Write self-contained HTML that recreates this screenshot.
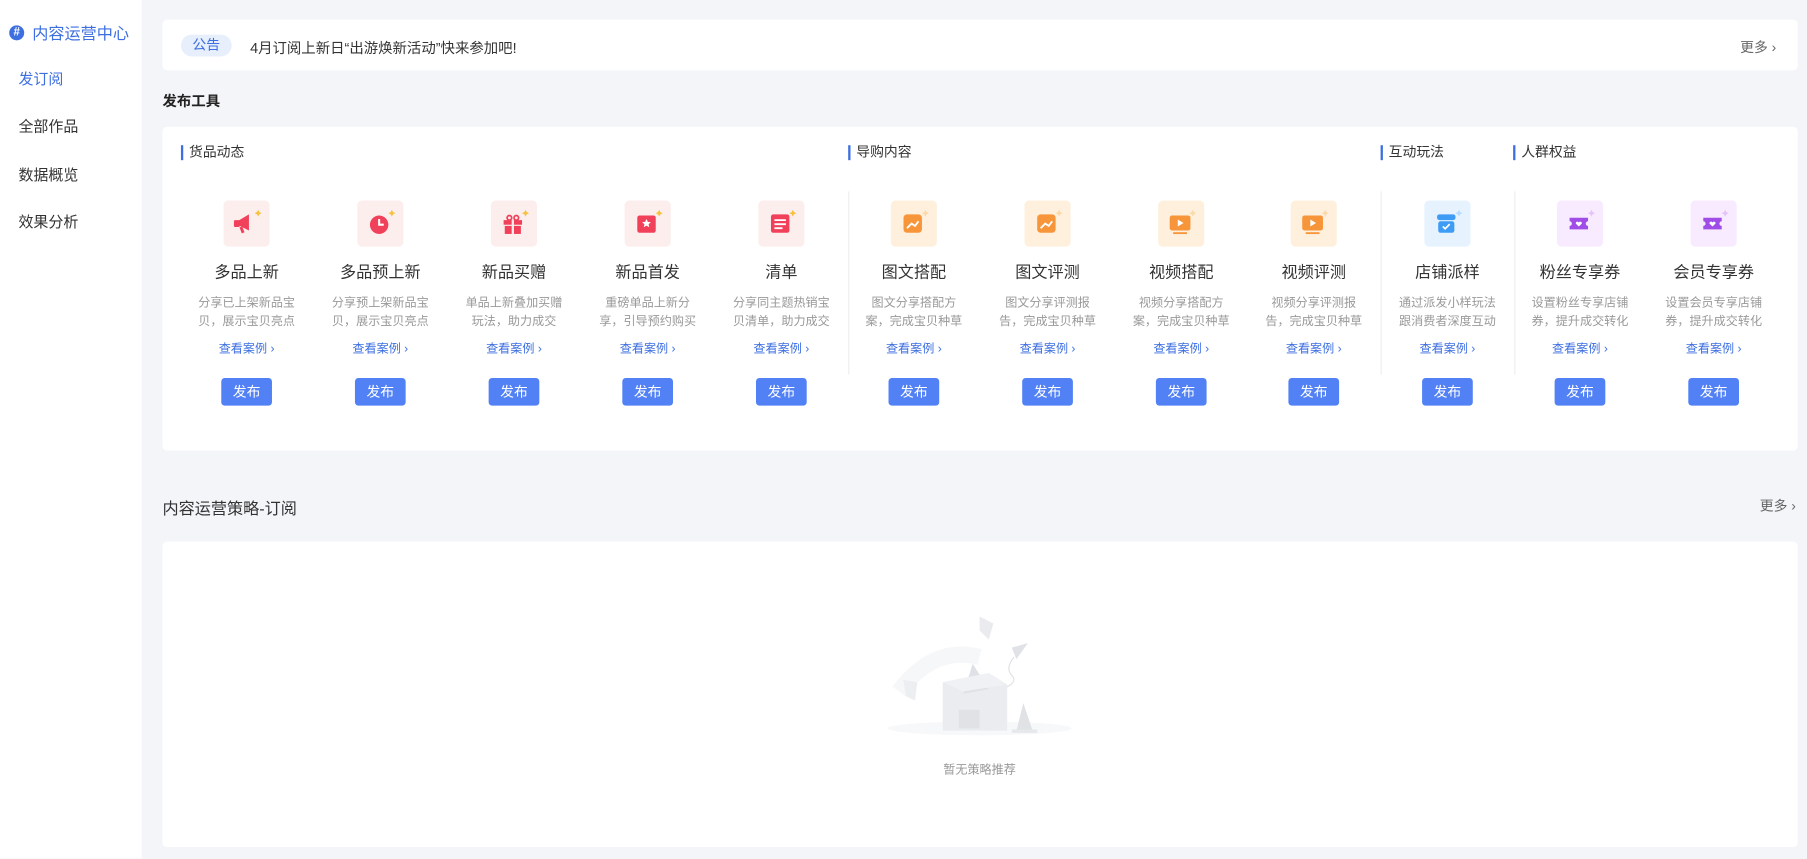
<!DOCTYPE html>
<html><head><meta charset="utf-8"><style>
*{margin:0;padding:0;box-sizing:border-box}
html,body{width:1807px;height:858px;overflow:hidden;background:#f3f5f9}
body{font-family:"Liberation Sans","Noto Sans CJK SC",sans-serif;color:#333}
#w{position:absolute;left:0;top:0;width:1568px;height:745px;transform:scale(1.15242);transform-origin:0 0}
.a{position:absolute}
.side{left:0;top:0;width:123px;height:745px;background:#fff}
.menu{left:16px;font-size:13px;color:#333}
.card{background:#fff;border-radius:4px}
.sh{top:126px;font-size:12px;color:#333;padding-left:5px;border-left:2px solid #3d6fe0;line-height:13px}
.col{position:absolute;top:166px;width:116px;text-align:center}
.ib{width:40px;height:40px;margin:8px auto 0;border-radius:4px;position:relative}
.ib svg{position:absolute;left:0;top:0}
.t{font-size:14px;color:#333;margin-top:14px;line-height:16px}
.d{font-size:10.5px;color:#999;line-height:16px;margin-top:11px;width:92px;margin-left:auto;margin-right:auto;white-space:nowrap;overflow:hidden}
.l{font-size:10.5px;color:#3d6fe0;margin-top:9px;line-height:14px}
.b{width:44px;height:24px;margin:18px auto 0;background:#5281f5;color:#fff;font-size:12px;line-height:24px;border-radius:3px}
.dv{position:absolute;top:166px;width:1px;height:159px;background:#eee}
</style></head><body><div id="w">
<div class="a side"></div>
<div class="a" style="left:8px;top:22px;width:13px;height:13px;border-radius:50%;background:#3d6fe0;color:#fff;font-size:10px;line-height:13px;text-align:center;font-weight:bold">#</div>
<div class="a" style="left:28px;top:19px;font-size:14px;color:#3d6fe0">内容运营中心</div>
<div class="a menu" style="top:58px;color:#3d6fe0">发订阅</div>
<div class="a menu" style="top:99px">全部作品</div>
<div class="a menu" style="top:141px">数据概览</div>
<div class="a menu" style="top:182px">效果分析</div>

<div class="a card" style="left:141px;top:17px;width:1419px;height:44px"></div>
<div class="a" style="left:157px;top:30px;width:44px;height:19px;border-radius:10px;background:#e8effc;color:#3d6fe0;font-size:12px;line-height:19px;text-align:center">公告</div>
<div class="a" style="left:217px;top:31px;font-size:12.5px;color:#333">4月订阅上新日“出游焕新活动”快来参加吧!</div>
<div class="a" style="left:1510px;top:32px;font-size:12px;color:#666">更多 ›</div>

<div class="a" style="left:141px;top:77px;font-size:12.5px;font-weight:bold;color:#222">发布工具</div>
<div class="a card" style="left:141px;top:110px;width:1419px;height:281px"></div>
<div class="a sh" style="left:157px">货品动态</div>
<div class="a sh" style="left:736px">导购内容</div>
<div class="a sh" style="left:1198px">互动玩法</div>
<div class="a sh" style="left:1313px">人群权益</div>
<div class="dv" style="left:736px"></div>
<div class="dv" style="left:1198px"></div>
<div class="dv" style="left:1314px"></div>

<div class="col" style="left:156px"><div class="ib" style="background:#fdeeee"><svg width="40" height="40"><path d="M12 18l10-6v14l-10-5z" fill="#f0405a"/><rect x="9" y="17" width="5" height="6" rx="1" fill="#f0405a"/><path d="M15 23l2 5" stroke="#f0405a" stroke-width="2.5"/><path d="M30 8l1 2 2 1-2 1-1 2-1-2-2-1 2-1z" fill="#f7c23a"/></svg></div><div class="t">多品上新</div><div class="d">分享已上架新品宝<br>贝，展示宝贝亮点</div><div class="l">查看案例 ›</div><div class="b">发布</div></div>
<div class="col" style="left:272px"><div class="ib" style="background:#fdeeee"><svg width="40" height="40"><circle cx="19" cy="21" r="8" fill="#f0405a"/><path d="M19 16v5h4" stroke="#fff" stroke-width="1.8" fill="none"/><path d="M30 8l1 2 2 1-2 1-1 2-1-2-2-1 2-1z" fill="#f7c23a"/></svg></div><div class="t">多品预上新</div><div class="d">分享预上架新品宝<br>贝，展示宝贝亮点</div><div class="l">查看案例 ›</div><div class="b">发布</div></div>
<div class="col" style="left:388px"><div class="ib" style="background:#fdeeee"><svg width="40" height="40"><rect x="11" y="17" width="16" height="4" fill="#f0405a"/><rect x="12" y="22" width="14" height="7" fill="#f0405a"/><rect x="18" y="17" width="2" height="12" fill="#fdeeee"/><circle cx="16" cy="15" r="2" fill="none" stroke="#f0405a" stroke-width="1.5"/><circle cx="22" cy="15" r="2" fill="none" stroke="#f0405a" stroke-width="1.5"/><path d="M30 8l1 2 2 1-2 1-1 2-1-2-2-1 2-1z" fill="#f7c23a"/></svg></div><div class="t">新品买赠</div><div class="d">单品上新叠加买赠<br>玩法，助力成交</div><div class="l">查看案例 ›</div><div class="b">发布</div></div>
<div class="col" style="left:504px"><div class="ib" style="background:#fdeeee"><svg width="40" height="40"><rect x="11" y="13" width="16" height="15" rx="2" fill="#f0405a"/><path d="M19 16l1.2 2.5 2.6.3-2 1.8.6 2.6-2.4-1.4-2.4 1.4.6-2.6-2-1.8 2.6-.3z" fill="#fff"/><path d="M30 8l1 2 2 1-2 1-1 2-1-2-2-1 2-1z" fill="#f7c23a"/></svg></div><div class="t">新品首发</div><div class="d">重磅单品上新分<br>享，引导预约购买</div><div class="l">查看案例 ›</div><div class="b">发布</div></div>
<div class="col" style="left:620px"><div class="ib" style="background:#fdeeee"><svg width="40" height="40"><rect x="11" y="12" width="16" height="16" rx="2" fill="#f0405a"/><path d="M14 17h10M14 20.5h10M14 24h7" stroke="#fff" stroke-width="1.6"/><path d="M30 8l1 2 2 1-2 1-1 2-1-2-2-1 2-1z" fill="#f7c23a"/></svg></div><div class="t">清单</div><div class="d">分享同主题热销宝<br>贝清单，助力成交</div><div class="l">查看案例 ›</div><div class="b">发布</div></div>
<div class="col" style="left:735px"><div class="ib" style="background:#fff0dd"><svg width="40" height="40"><rect x="11" y="12" width="16" height="16" rx="3" fill="#f7953a"/><path d="M14 24l4-4 3 2 3-4" stroke="#fff" stroke-width="1.6" fill="none"/><path d="M30 8l1 2 2 1-2 1-1 2-1-2-2-1 2-1z" fill="#fbd9a8"/></svg></div><div class="t">图文搭配</div><div class="d">图文分享搭配方<br>案，完成宝贝种草</div><div class="l">查看案例 ›</div><div class="b">发布</div></div>
<div class="col" style="left:851px"><div class="ib" style="background:#fff0dd"><svg width="40" height="40"><rect x="11" y="12" width="16" height="16" rx="3" fill="#f7953a"/><path d="M14 24l4-4 3 2 3-4" stroke="#fff" stroke-width="1.6" fill="none"/><path d="M30 8l1 2 2 1-2 1-1 2-1-2-2-1 2-1z" fill="#fbd9a8"/></svg></div><div class="t">图文评测</div><div class="d">图文分享评测报<br>告，完成宝贝种草</div><div class="l">查看案例 ›</div><div class="b">发布</div></div>
<div class="col" style="left:967px"><div class="ib" style="background:#fff0dd"><svg width="40" height="40"><rect x="10" y="13" width="18" height="13" rx="2" fill="#f7953a"/><path d="M17 16.5v6l5-3z" fill="#fff"/><rect x="13" y="27.5" width="12" height="1.6" fill="#f7953a"/><path d="M30 8l1 2 2 1-2 1-1 2-1-2-2-1 2-1z" fill="#fbd9a8"/></svg></div><div class="t">视频搭配</div><div class="d">视频分享搭配方<br>案，完成宝贝种草</div><div class="l">查看案例 ›</div><div class="b">发布</div></div>
<div class="col" style="left:1082px"><div class="ib" style="background:#fff0dd"><svg width="40" height="40"><rect x="10" y="13" width="18" height="13" rx="2" fill="#f7953a"/><path d="M17 16.5v6l5-3z" fill="#fff"/><rect x="13" y="27.5" width="12" height="1.6" fill="#f7953a"/><path d="M30 8l1 2 2 1-2 1-1 2-1-2-2-1 2-1z" fill="#fbd9a8"/></svg></div><div class="t">视频评测</div><div class="d">视频分享评测报<br>告，完成宝贝种草</div><div class="l">查看案例 ›</div><div class="b">发布</div></div>
<div class="col" style="left:1198px"><div class="ib" style="background:#e6f3ff"><svg width="40" height="40"><rect x="11" y="12" width="16" height="5" rx="2" fill="#3f9cf5"/><rect x="12" y="18" width="14" height="10" rx="2" fill="#3f9cf5"/><path d="M16 22.5l2 2 4-4" stroke="#fff" stroke-width="1.5" fill="none"/><path d="M30 8l1 2 2 1-2 1-1 2-1-2-2-1 2-1z" fill="#b6dcff"/></svg></div><div class="t">店铺派样</div><div class="d">通过派发小样玩法<br>跟消费者深度互动</div><div class="l">查看案例 ›</div><div class="b">发布</div></div>
<div class="col" style="left:1313px"><div class="ib" style="background:#f8eaff"><svg width="40" height="40"><path d="M11 15h16v3a2 2 0 000 4v3H11v-3a2 2 0 000-4z" fill="#9f4de6"/><path d="M19 22.5l-2.5-2.3a1.3 1.3 0 012.5-1 1.3 1.3 0 012.5 1z" fill="#fff"/><path d="M30 8l1 2 2 1-2 1-1 2-1-2-2-1 2-1z" fill="#e3c3fa"/></svg></div><div class="t">粉丝专享券</div><div class="d">设置粉丝专享店铺<br>券，提升成交转化</div><div class="l">查看案例 ›</div><div class="b">发布</div></div>
<div class="col" style="left:1429px"><div class="ib" style="background:#f8eaff"><svg width="40" height="40"><path d="M11 15h16v3a2 2 0 000 4v3H11v-3a2 2 0 000-4z" fill="#9f4de6"/><path d="M19 22.5l-2.5-2.3a1.3 1.3 0 012.5-1 1.3 1.3 0 012.5 1z" fill="#fff"/><path d="M30 8l1 2 2 1-2 1-1 2-1-2-2-1 2-1z" fill="#e3c3fa"/></svg></div><div class="t">会员专享券</div><div class="d">设置会员专享店铺<br>券，提升成交转化</div><div class="l">查看案例 ›</div><div class="b">发布</div></div>

<div class="a" style="left:141px;top:431px;font-size:14px;color:#333">内容运营策略-订阅</div>
<div class="a" style="left:1527px;top:430px;font-size:12px;color:#666">更多 ›</div>
<div class="a card" style="left:141px;top:470px;width:1419px;height:265px"></div>
<svg class="a" style="left:760px;top:530px" width="180" height="120">
<ellipse cx="90" cy="102" rx="80" ry="6" fill="#f7f8fa"/>
<path d="M20 70q30-40 70-30" stroke="#f6f7f9" stroke-width="14" fill="none"/>
<path d="M90 5l12 6-4 14-8-8z" fill="#e9ebef"/>
<path d="M118 32l14-4-10 14z" fill="#e0e2e7"/>
<path d="M120 40q-8 10-2 16t-8 12" stroke="#e0e2e7" fill="none"/>
<path d="M24 60l12 2-2 16-8-4z" fill="#eceef1"/>
<path d="M58 62l40-8 16 10v40H58z" fill="#eaecef"/>
<path d="M76 72l8-26 14 22z" fill="#dfe1e6"/>
<path d="M58 62l40-8 16 10-38 6z" fill="#f0f1f4"/>
<rect x="72" y="86" width="18" height="16" fill="#e0e2e6"/>
<path d="M128 80l8 24h-14z" fill="#e0e2e6"/>
<rect x="118" y="103" width="22" height="3" fill="#e6e8eb"/>
</svg>
<div class="a" style="left:790px;top:660px;width:120px;text-align:center;font-size:10.5px;color:#999">暂无策略推荐</div>
</div></body></html>
